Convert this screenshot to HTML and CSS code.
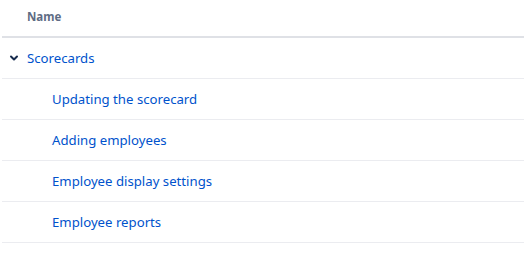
FILE: index.html
```html
<!DOCTYPE html>
<html>
<head>
<meta charset="utf-8">
<link rel="stylesheet" href="styles.css">
</head>
<body>
<div class="table">
  <div class="head">Name</div>
  <div class="row parent">
    <svg class="chev" width="10" height="10" viewBox="0 0 10 10"><path d="M2 3.5 L5 6.5 L8 3.5" fill="none" stroke="#172b4d" stroke-width="2" stroke-linecap="round" stroke-linejoin="round"/></svg>
    <a class="link">Scorecards</a>
  </div>
  <div class="row child"><a class="link">Updating the scorecard</a></div>
  <div class="row child"><a class="link">Adding employees</a></div>
  <div class="row child"><a class="link">Employee display settings</a></div>
  <div class="row child"><a class="link">Employee reports</a></div>
</div>
</body>
</html>
```

FILE: styles.css
```css
html, body {
  margin: 0;
  padding: 0;
  background: #fff;
}
body {
  font-family: "Noto Sans", "Open Sans", sans-serif;
  font-size: 13.2px;
}
.table {
  margin-left: 2px;
}
.head {
  height: 38px;
  box-sizing: border-box;
  border-bottom: 2px solid #dfe1e6;
  padding-left: 25px;
  padding-bottom: 3px;
  display: flex;
  align-items: center;
  font-weight: 700;
  font-size: 11.5px;
  color: #5e6c84;
}
.row {
  height: 41px;
  box-sizing: border-box;
  border-bottom: 1px solid #ebecf0;
  display: flex;
  align-items: center;
}
.parent {
  padding-left: 7px;
}
.chev {
  margin-right: 8px;
}
.child {
  padding-left: 50px;
}
.link {
  color: #0052cc;
  text-decoration: none;
}
```
